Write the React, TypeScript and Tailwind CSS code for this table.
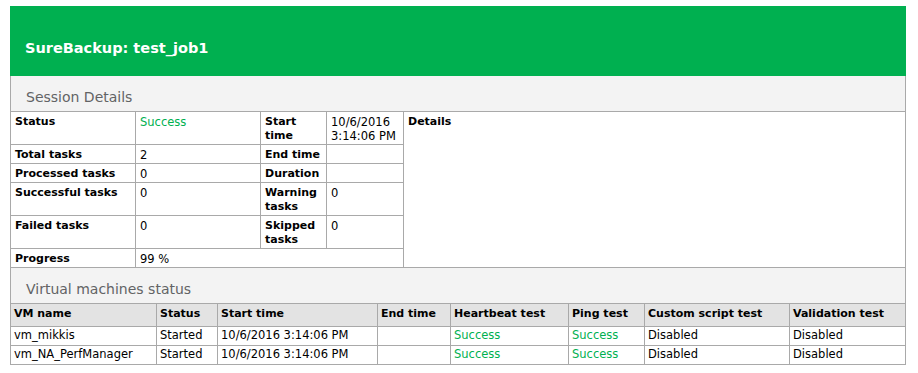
import React from "react";

const F = { fontFamily: '"DejaVu Sans", Verdana, sans-serif' };

function SCell({
  children,
  bold,
  green,
  className = "",
}: {
  children?: React.ReactNode;
  bold?: boolean;
  green?: boolean;
  className?: string;
}) {
  return (
    <div
      className={`border-r border-b border-[#a9a9a9] pl-[4px] pr-[3px] pt-[3px] pb-[1px] leading-[14px] ${
        bold ? "text-[11px] font-bold text-black" : green ? "text-[11.5px] text-[#00b050]" : "text-[11.5px] text-black"
      } ${className}`}
    >
      {children}
    </div>
  );
}

function Title({ children }: { children: React.ReactNode }) {
  return (
    <div className="h-[35px] border-x border-[#a9a9a9] bg-[#f3f3f3] pl-[15px] pt-[12px] text-[14px] leading-[18px] text-[#626365]">
      {children}
    </div>
  );
}

function VCell({
  children,
  head,
  green,
}: {
  children?: React.ReactNode;
  head?: boolean;
  green?: boolean;
}) {
  return (
    <div
      className={`whitespace-nowrap border-r border-b border-[#a9a9a9] pl-[3px] leading-[14px] ${
        head
          ? "bg-[#e3e3e3] pt-[3px] pb-[5px] text-[11px] font-bold text-black"
          : green
          ? "bg-white pt-[1px] pb-[3px] text-[11.5px] text-[#00b050]"
          : "bg-white pt-[1px] pb-[3px] text-[11.5px] text-black"
      }`}
    >
      {children}
    </div>
  );
}

export default function App() {
  const vms = [
    ["vm_mikkis", "Started", "10/6/2016 3:14:06 PM", ""],
    ["vm_NA_PerfManager", "Started", "10/6/2016 3:14:06 PM", ""],
  ];
  return (
    <div className="min-h-[373px] bg-white pt-[6px] pl-[10px]" style={F}>
      <div className="w-[896px]">
        <div className="h-[70px] bg-[#00b050] pl-[15px] pt-[33px] text-[14.5px] font-bold leading-[18px] text-white">
          SureBackup: test_job1
        </div>
        <Title>Session Details</Title>
        <div className="grid grid-cols-[125px_125px_66px_77px_502px] border-t border-l border-[#a9a9a9] bg-white">
          <SCell bold>Status</SCell>
          <SCell green>Success</SCell>
          <SCell bold>Start time</SCell>
          <SCell>10/6/2016 3:14:06 PM</SCell>
          <SCell bold className="row-span-6">
            Details
          </SCell>
          <SCell bold>Total tasks</SCell>
          <SCell>2</SCell>
          <SCell bold>End time</SCell>
          <SCell></SCell>
          <SCell bold>Processed tasks</SCell>
          <SCell>0</SCell>
          <SCell bold>Duration</SCell>
          <SCell></SCell>
          <SCell bold>Successful tasks</SCell>
          <SCell>0</SCell>
          <SCell bold>Warning tasks</SCell>
          <SCell>0</SCell>
          <SCell bold>Failed tasks</SCell>
          <SCell>0</SCell>
          <SCell bold>Skipped tasks</SCell>
          <SCell>0</SCell>
          <SCell bold>Progress</SCell>
          <SCell className="col-span-3">99 %</SCell>
        </div>
        <Title>Virtual machines status</Title>
        <div className="grid grid-cols-[146px_61px_160px_73px_118px_76px_145px_116px] border-t border-l border-[#a9a9a9]">
          <VCell head>VM name</VCell>
          <VCell head>Status</VCell>
          <VCell head>Start time</VCell>
          <VCell head>End time</VCell>
          <VCell head>Heartbeat test</VCell>
          <VCell head>Ping test</VCell>
          <VCell head>Custom script test</VCell>
          <VCell head>Validation test</VCell>
          {vms.map((v) => (
            <React.Fragment key={v[0]}>
              <VCell>{v[0]}</VCell>
              <VCell>{v[1]}</VCell>
              <VCell>{v[2]}</VCell>
              <VCell>{v[3]}</VCell>
              <VCell green>Success</VCell>
              <VCell green>Success</VCell>
              <VCell>Disabled</VCell>
              <VCell>Disabled</VCell>
            </React.Fragment>
          ))}
        </div>
      </div>
    </div>
  );
}
